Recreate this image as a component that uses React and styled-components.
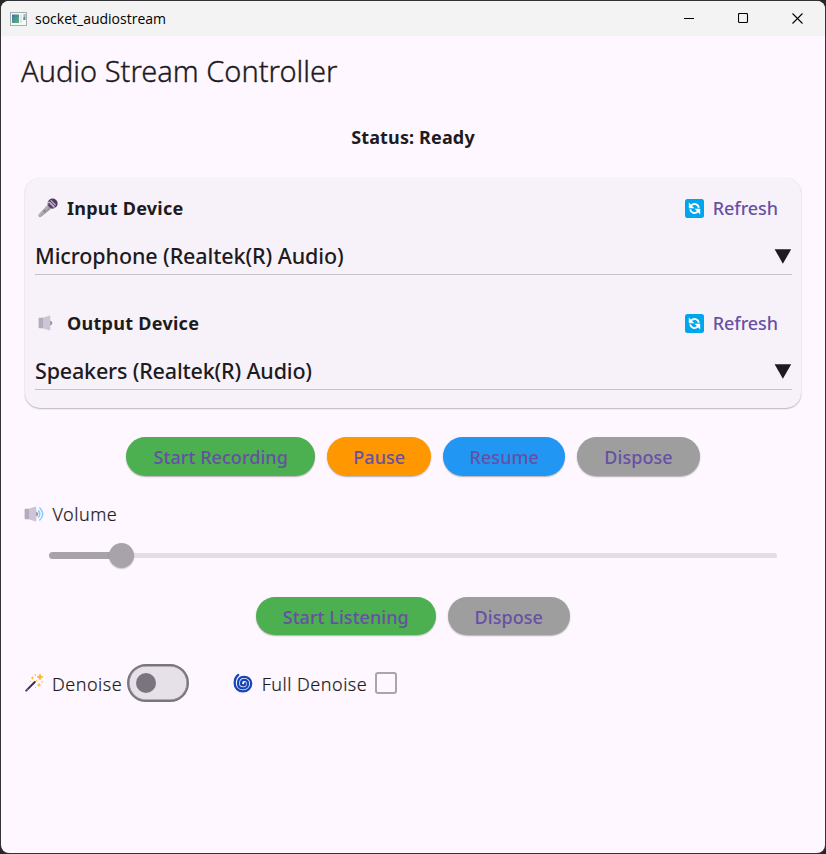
import React, { useState } from 'react';
import styled, { createGlobalStyle } from 'styled-components';

const Global = createGlobalStyle`
  * { box-sizing: border-box; }
  html, body { margin: 0; height: 100%; background: #262626; overflow: hidden; }
  button { font: inherit; border: 0; padding: 0; margin: 0; background: none; cursor: pointer; }
  svg { display: block; flex: none; }
`;

const Window = styled.main`
  width: 100%;
  height: 854px;
  padding: 1px;
  background: #333236;
  border-radius: 9px;
  font-family: "Noto Sans", "Open Sans", sans-serif;
  color: #1d1b20;
  white-space: nowrap;
`;

const Surface = styled.div`
  height: 100%;
  border-radius: 8px;
  overflow: hidden;
  background: #fef7ff;
`;

const TitleBar = styled.header`
  display: flex;
  align-items: center;
  height: 35px;
  padding-left: 9px;
  background: #f3f3f3;
`;

const AppName = styled.span`
  flex: 1;
  margin-left: 8px;
  font-family: "Open Sans", sans-serif;
  font-size: 14px;
  line-height: 35px;
  color: #000;
`;

const Caption = styled.button`
  display: flex;
  width: ${(p) => p.$w}px;
  height: 35px;
  align-items: center;
  justify-content: center;
`;

const Heading = styled.h1`
  margin: 0;
  padding-left: 20px;
  font-size: 29px;
  font-weight: 300;
  line-height: 69px;
  -webkit-text-stroke: 0.35px #1d1b20;
`;

const Status = styled.p`
  margin: 18px 0 0;
  height: 55px;
  text-align: center;
  font-size: 18px;
  font-weight: 700;
  line-height: 28px;
  letter-spacing: 0.14px;
`;

const Card = styled.section`
  height: 230px;
  margin: 0 24px;
  padding: 10px 9px 18px 10px;
  display: flex;
  flex-direction: column;
  gap: 28px;
  border-radius: 15px;
  background: #f7f2fa;
  box-shadow: 0 1px 1.5px rgba(0, 0, 0, 0.26), 0 0 1.5px rgba(0, 0, 0, 0.08);
`;

const DeviceHead = styled.div`
  display: flex;
  align-items: center;
  height: 40px;
  padding: 0 14px 0 3px;
`;

const DeviceTitle = styled.h2`
  flex: 1;
  margin: 0 0 0 9px;
  font-size: 18px;
  font-weight: 700;
  line-height: 40px;
  letter-spacing: ${(p) => p.$ls}px;
`;

const RefreshButton = styled.button`
  display: flex;
  align-items: center;
  gap: 8.5px;
  font-size: 18px;
  font-weight: 500;
  letter-spacing: -0.08px;
  color: #6750a4;
`;

const Select = styled.div`
  display: flex;
  align-items: center;
  justify-content: space-between;
  height: 47px;
  padding: 10px 0.5px 0 0;
  border-bottom: 1px solid #c6c1c9;
  font-size: 21.5px;
  font-weight: 500;
`;

const SelectValue = styled.span`
  line-height: 36px;
  letter-spacing: ${(p) => p.$ls}px;
`;

const ButtonRow = styled.div`
  display: flex;
  justify-content: center;
  gap: 12px;
  margin-top: ${(p) => p.$top}px;
`;

const Pill = styled.button`
  width: ${(p) => p.$w}px;
  height: 38.5px;
  border-radius: 20px;
  background: ${(p) => p.$bg};
  color: #6750a4;
  font-size: 18px;
  font-weight: 500;
  line-height: 40px;
  letter-spacing: 0.05px;
  box-shadow: 0 1px 1.5px rgba(0, 0, 0, 0.3);
`;

const Label = styled.span`
  margin-left: ${(p) => p.$gap}px;
  padding-top: ${(p) => p.$drop || 0}px;
  font-size: 18px;
  font-weight: 300;
  line-height: 28px;
  letter-spacing: 0.5px;
  -webkit-text-stroke: 0.2px #1d1b20;
`;

const VolumeRow = styled.div`
  display: flex;
  align-items: center;
  margin: 24.5px 0 0 22.5px;
`;

const Slider = styled.div`
  display: flex;
  align-items: center;
  height: 26px;
  margin: 14px 48px 0;
`;

const TrackActive = styled.div`
  width: 61px;
  height: 7px;
  border-radius: 4px 0 0 4px;
  background: #a8a3aa;
`;

const Thumb = styled.div`
  flex: none;
  width: 25px;
  height: 25px;
  margin: 0 -1px;
  z-index: 1;
  border-radius: 50%;
  background: #a8a3aa;
  box-shadow: 0 1px 1.5px rgba(0, 0, 0, 0.22);
`;

const TrackRest = styled.div`
  flex: 1;
  height: 5px;
  border-radius: 0 3px 3px 0;
  background: #e3dde5;
`;

const Options = styled.div`
  display: flex;
  align-items: center;
  height: 38px;
  margin: 28.5px 0 0 23px;
`;

const Switch = styled.button`
  display: flex;
  align-items: center;
  justify-content: ${(p) => (p.$on ? 'flex-end' : 'flex-start')};
  width: 62px;
  height: 38px;
  margin: 0 44px 0 5px;
  padding: 0 7px;
  border: 2px solid #79747e;
  border-radius: 19px;
  background: #e6e0e9;
  box-shadow: inset 0 0 0 0.5px #79747e;
`;

const Knob = styled.span`
  width: 20px;
  height: 20px;
  border-radius: 50%;
  background: #79747e;
`;

const CheckBox = styled.button`
  width: 22px;
  height: 22px;
  margin-left: 7.5px;
  border: 2px solid #aaa5ac;
  border-radius: 3px;
  background: ${(p) => (p.$on ? '#aaa5ac' : 'transparent')};
`;

const AppIcon = () => (
  <svg width="17" height="14" viewBox="0 0 17 14">
    <defs>
      <linearGradient id="screen" x1="0" y1="0" x2="1" y2="1">
        <stop offset="0" stopColor="#3b76a8" />
        <stop offset="1" stopColor="#5fb37a" />
      </linearGradient>
    </defs>
    <rect x=".5" y=".5" width="16" height="13" fill="#f7f8f8" stroke="#a9adb0" />
    <rect x="2" y="2.5" width="7" height="8.5" fill="url(#screen)" />
    <rect x="10" y="2.5" width="2" height="8.5" fill="#e3e5e6" />
    <rect x="13.3" y="2" width="2.2" height="6" fill="#4c91a8" />
    <rect x="13.3" y="2" width="1.2" height="3" fill="#d8ecdf" />
  </svg>
);

const MicIcon = () => (
  <svg width="20" height="20" viewBox="0 0 20 20">
    <path d="M10.2 6.2 14 10 3.2 18.7Q1.8 19.6.9 18.7T.8 16.6Z" fill="#9b9b9b" />
    <path d="M10.2 6.2 12 8 2 18.9Q1.2 18.9.8 18.1L.8 16.6Z" fill="#b0adb1" />
    <path d="M5.8 13.8 7.2 12.3" stroke="#777" strokeWidth="1.4" />
    <circle cx="14.6" cy="5.5" r="5" fill="#533566" />
    <path d="M9.5 4.2Q11 2.7 12.3 4L16.4 8.1Q17.4 9.3 16.2 10.4Q14.9 11.2 13.7 10L10 6.3Q8.8 5 9.5 4.2Z" fill="#c7c4c9" />
    <path d="M10.3 7.2 13 9.9Q15 11 16.2 10.1L11 4.8Q9.5 5 10.3 7.2Z" fill="#62417b" />
    <path d="M12.7 2.3 17.7 7.3" stroke="#b5adba" strokeWidth="1.3" />
  </svg>
);

const RefreshIcon = () => (
  <svg width="19" height="19" viewBox="0 0 19 19">
    <rect width="19" height="19" rx="2.5" fill="#00a6ed" />
    <path d="M6.2 6.4Q8.4 4.5 10.8 5.2Q13.3 6 13.9 8.8" fill="none" stroke="#fff" strokeWidth="1.9" />
    <path d="M3.8 3.6V9.2H9.4Z" fill="#fff" />
    <path d="M12.8 12.6Q10.6 14.5 8.2 13.8Q5.7 13 5.1 10.4" fill="none" stroke="#fff" strokeWidth="1.9" />
    <path d="M15.2 15.4V9.8H9.6Z" fill="#fff" />
  </svg>
);

const SpeakerIcon = ({ waves }) => (
  <svg width="20" height="18" viewBox="0 0 20 18">
    <path d="M12 6.5Q14.3 7 14.3 9T12 11.5Z" fill="#998ea4" />
    <path d="M4 4 10.8 1.7Q12.3 1.3 12.3 2.8V15.2Q12.3 16.7 10.8 16.3L4 14Z" fill="#cdc4d6" />
    <path d="M1.6 3.8H5V14.2H1.6Q.6 14.2.6 13.2V4.8Q.6 3.8 1.6 3.8Z" fill="#b4abbd" />
    {waves && (
      <g fill="none" stroke="#83cbf8" strokeWidth="1.4" strokeLinecap="round">
        <path d="M14.5 5.7Q17.2 9 14.5 12.3" />
        <path d="M15.8 3Q21.8 9 15.8 15" />
      </g>
    )}
  </svg>
);

const WandIcon = () => (
  <svg width="20" height="20" viewBox="0 0 20 20">
    <path d="M2.2 17.6 10.8 9" stroke="#352e58" strokeWidth="2" strokeLinecap="round" />
    <path d="M2.6 17.2 4 15.8" stroke="#7162a8" strokeWidth="1.5" />
    <g fill="#fcb62e">
      <path d="M16 1Q16.3 3.7 19 4Q16.3 4.3 16 7Q15.7 4.3 13 4Q15.7 3.7 16 1Z" stroke="#fcb62e" strokeWidth=".7" />
      <path d="M8.3 3Q8.5 4.8 10.2 5Q8.5 5.2 8.3 7Q8.1 5.2 6.4 5Q8.1 4.8 8.3 3Z" />
      <path d="M15 10Q15.2 11.8 17 12Q15.2 12.2 15 14Q14.8 12.2 13 12Q14.8 11.8 15 10Z" stroke="#fcb62e" strokeWidth=".3" />
      <circle cx="11.5" cy="2" r=".8" />
      <circle cx="18" cy="9" r=".8" />
      <circle cx="6.3" cy="8.3" r=".6" />
      <circle cx="11.5" cy="14.5" r=".6" />
      <circle cx="12.7" cy="7.8" r=".7" />
    </g>
  </svg>
);

const CycloneIcon = () => (
  <svg width="20" height="20" viewBox="0 0 20 20" fill="none" strokeLinecap="round">
    <path
      d="M5.2 2Q1.7 4.6 1.7 10.2C1.7 15.2 5.4 18.4 10 18.4S18.2 15 18.2 10.6 15 3.8 11 3.8 5 6.4 5 10.4s2.4 4.9 5.3 4.9 4.7-2.1 4.7-4.6-1.7-3.8-3.8-3.8S8 8.4 8 10.3s1.1 2.1 2.3 2.1 1.9-.8 1.9-1.9"
      stroke="#1746b8"
      strokeWidth="2.3"
    />
  </svg>
);

const Triangle = () => (
  <svg width="18" height="15" viewBox="0 0 18 15">
    <path d="M.6 .2H17.2L8.9 14.8Z" fill="#1d1b20" />
  </svg>
);

const Device = ({ icon, title, value, titleLs, valueLs }) => (
  <div>
    <DeviceHead>
      {icon}
      <DeviceTitle $ls={titleLs}>{title}</DeviceTitle>
      <RefreshButton>
        <RefreshIcon />
        Refresh
      </RefreshButton>
    </DeviceHead>
    <Select>
      <SelectValue $ls={valueLs}>{value}</SelectValue>
      <Triangle />
    </Select>
  </div>
);

export default function App() {
  const [denoise, setDenoise] = useState(false);
  const [full, setFull] = useState(false);
  return (
    <Window>
      <Global />
      <Surface>
        <TitleBar>
          <AppIcon />
          <AppName>socket_audiostream</AppName>
          <Caption $w={54} aria-label="Minimize">
            <svg width="11" height="11"><path d="M0 5.5H10" stroke="#000" /></svg>
          </Caption>
          <Caption $w={54} aria-label="Maximize">
            <svg width="11" height="11"><rect x=".5" y=".5" width="9" height="9" rx="1" fill="none" stroke="#000" strokeWidth="1.1" /></svg>
          </Caption>
          <Caption $w={55} aria-label="Close">
            <svg width="11" height="11"><path d="M.5 .5 10.5 10.5M10.5 .5 .5 10.5" stroke="#000" strokeWidth="1.1" /></svg>
          </Caption>
        </TitleBar>
        <Heading>Audio Stream Controller</Heading>
        <Status>Status: Ready</Status>
        <Card>
          <Device icon={<MicIcon />} title="Input Device" value="Microphone (Realtek(R) Audio)" titleLs={0.25} valueLs={-0.11} />
          <Device icon={<SpeakerIcon />} title="Output Device" value="Speakers (Realtek(R) Audio)" titleLs={0.28} valueLs={-0.18} />
        </Card>
        <ButtonRow $top={29}>
          <Pill $w={189} $bg="#4caf50">Start Recording</Pill>
          <Pill $w={104} $bg="#ff9800">Pause</Pill>
          <Pill $w={122} $bg="#2196f3">Resume</Pill>
          <Pill $w={122.5} $bg="#9e9e9e">Dispose</Pill>
        </ButtonRow>
        <VolumeRow>
          <SpeakerIcon waves />
          <Label $gap={9}>Volume</Label>
        </VolumeRow>
        <Slider>
          <TrackActive />
          <Thumb />
          <TrackRest />
        </Slider>
        <ButtonRow $top={28.5}>
          <Pill $w={179.5} $bg="#4caf50">Start Listening</Pill>
          <Pill $w={122.5} $bg="#9e9e9e">Dispose</Pill>
        </ButtonRow>
        <Options>
          <WandIcon />
          <Label $gap={8} $drop={2}>Denoise</Label>
          <Switch $on={denoise} role="switch" aria-checked={denoise} aria-label="Denoise" onClick={() => setDenoise(!denoise)}>
            <Knob />
          </Switch>
          <CycloneIcon />
          <Label $gap={8.5} $drop={2}>Full Denoise</Label>
          <CheckBox $on={full} role="checkbox" aria-checked={full} aria-label="Full Denoise" onClick={() => setFull(!full)} />
        </Options>
      </Surface>
    </Window>
  );
}
